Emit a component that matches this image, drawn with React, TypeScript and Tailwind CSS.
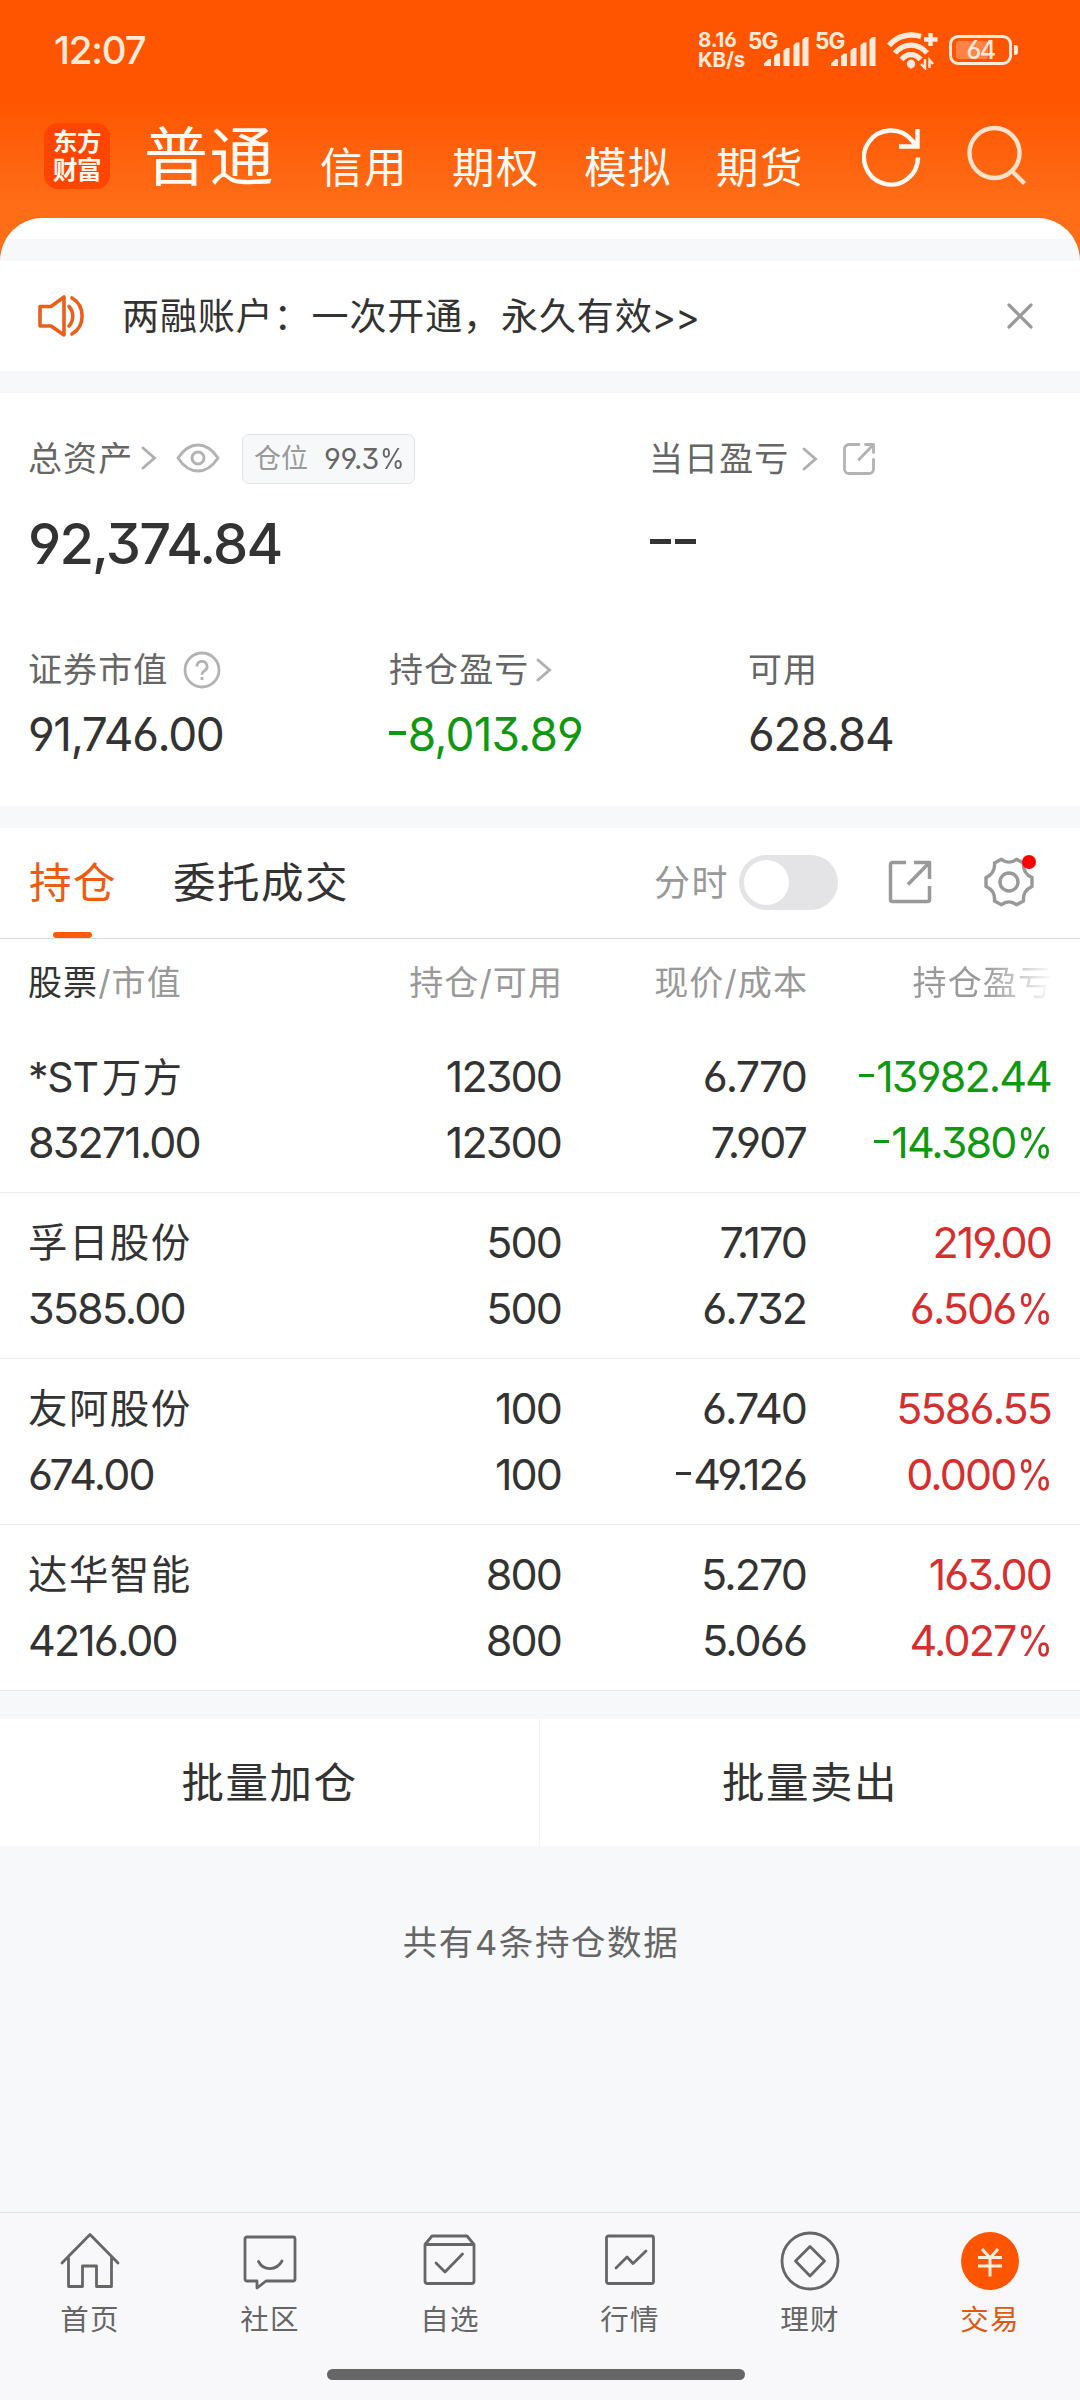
import React from 'react';

type Holding = {
  name: string;
  value: string;
  qty: string;
  avail: string;
  price: string;
  cost: string;
  profit: string;
  rate: string;
  up: boolean;
};

const holdings: Holding[] = [
  { name: '*ST万方', value: '83271.00', qty: '12300', avail: '12300', price: '6.770', cost: '7.907', profit: '-13982.44', rate: '-14.380%', up: false },
  { name: '孚日股份', value: '3585.00', qty: '500', avail: '500', price: '7.170', cost: '6.732', profit: '219.00', rate: '6.506%', up: true },
  { name: '友阿股份', value: '674.00', qty: '100', avail: '100', price: '6.740', cost: '-49.126', profit: '5586.55', rate: '0.000%', up: true },
  { name: '达华智能', value: '4216.00', qty: '800', avail: '800', price: '5.270', cost: '5.066', profit: '163.00', rate: '4.027%', up: true },
];

function Num({ children, className = '' }: { children: string; className?: string }) {
  const negative = children.startsWith('-');
  const percent = children.endsWith('%');
  const digits = children.replace('-', '').replace('%', '');
  return (
    <span className={`whitespace-nowrap ${className}`}>
      {negative && <span className="mr-[0.05em] inline-block h-[0.085em] w-[0.36em] bg-current align-[0.34em]" />}
      {digits}
      {percent && <span className="-ml-[0.11em] inline-block origin-right scale-x-[0.86]">%</span>}
    </span>
  );
}

function Signal() {
  return (
    <div className="relative h-[34px] w-[60px]">
      <span className="absolute left-0 top-[-1px] text-[22.500px] font-bold leading-[20px] tracking-[-0.900px]">5G</span>
      <svg className="absolute left-[16px] top-[5px]" width="45" height="29" viewBox="0 0 45 29" fill="currentColor">
        <path d="M0 29v-2.500l4.500-4.500H7V29zM10 29V19l3-2.500h3V29zM19.500 29V13.500l3-2.500h3V29zM29.500 29V8l3-2.500h3V29zM38.500 29V2.500l3-2.500h3v29z" />
      </svg>
    </div>
  );
}

function StatusBar() {
  return (
    <div className="flex h-[100px] items-start justify-between pl-[54px] pr-[62px] text-[#ffeadb]">
      <div className="mt-[30px] text-[38.500px] font-medium leading-[40px] tracking-[-1.200px]">12:07</div>
      <div className="mt-[32px] flex">
        <div className="-mt-[2px] w-[50px] whitespace-nowrap text-[20.500px] font-bold leading-[20px] tracking-[-0.200px]">
          <div>8.16</div>
          <div>KB/s</div>
        </div>
        <div className="flex gap-[7px]">
          <Signal />
          <Signal />
        </div>
        <svg className="ml-[12px]" width="52" height="38" viewBox="0 0 52 38" fill="none" stroke="currentColor" strokeWidth="5.400">
          <path d="M2 13.500C10 4 22 1 34 4.500" />
          <path d="M8 21C17 10.500 31 10.500 40 21" />
          <path d="M14.500 27.500C20 21 28 21 33.500 27.500" />
          <path d="M24 27.500a4.500 4.500 0 0 1 3.500 7L24 37l-3.500-2.500a4.500 4.500 0 0 1 3.500-7z" fill="currentColor" stroke="none" />
          <path d="M43.500 1v13M37 7.500h13.500" strokeWidth="4.400" />
          <path d="M38 27v9l-4-4M42.500 36v-8l3.500 4" strokeWidth="2.400" />
        </svg>
        <div className="ml-[10px] mt-[3px] flex h-[30px] items-center">
          <div className="relative flex h-[30px] w-[63px] items-center justify-center rounded-[9px] border-[3px] border-current">
            <div className="absolute left-[4px] top-[3px] h-[18px] w-[32px] rounded-[3px] bg-[#ff8344]" />
            <span className="relative text-[25px] font-medium leading-[24px] tracking-[-1.500px]">64</span>
          </div>
          <div className="ml-[2px] h-[10px] w-[4px] rounded-r-[3px] bg-current" />
        </div>
      </div>
    </div>
  );
}

function TopNav() {
  return (
    <div className="flex h-[118px] text-[#fffaf3]">
      <div className="ml-[44px] mt-[23px] flex h-[66px] w-[66px] flex-col items-center justify-center rounded-[14px] bg-[#ff4500] text-[24.500px] font-bold leading-[28px] tracking-[-0.500px]">
        <div>东方</div>
        <div>财富</div>
      </div>
      <div className="ml-[34px] mt-[17px] w-[133px] whitespace-nowrap text-[64px] leading-[80px] tracking-[1.500px]">普通</div>
      <div className="ml-[43px] mt-[48px] flex gap-[44px] text-[42.500px] leading-[40px] tracking-[1.500px]">
        <span>信用</span>
        <span>期权</span>
        <span>模拟</span>
        <span>期货</span>
      </div>
      <svg className="ml-[58px] mt-[26px]" width="62" height="64" viewBox="0 0 62 64" fill="none" stroke="currentColor" strokeWidth="4.400">
        <path d="M56 31.500A27 27 0 1 1 50 14.500L54.500 20" />
        <path d="M55.500 3v17.500H37" />
      </svg>
      <svg className="ml-[42px] mt-[23px] text-[#ffe2cc]" width="62" height="66" viewBox="0 0 62 66" fill="none" stroke="currentColor" strokeWidth="4.400">
        <circle cx="28.500" cy="30" r="25" />
        <path d="M45.500 47.500l13 13" />
      </svg>
    </div>
  );
}

function Chevron({ className = '' }: { className?: string }) {
  return (
    <svg className={`text-[#b0b0b0] ${className}`} width="16" height="24" viewBox="0 0 16 24" fill="none" stroke="currentColor" strokeWidth="2.900" strokeLinecap="round">
      <path d="M2 2l11.500 10L2 22" />
    </svg>
  );
}

function Notice() {
  return (
    <div className="flex h-[110px] items-center bg-white">
      <svg className="ml-[36px]" width="50" height="44" viewBox="0 0 50 44" fill="none" stroke="#e8601c" strokeWidth="3.600" strokeLinejoin="round" strokeLinecap="round">
        <path d="M4 12.500h11L28 3v38L15 32H4z" />
        <path d="M33 12.500c5 5.500 5 14 0 19.500M36 4c13.500 8 13.500 28 0 36" />
      </svg>
      <span className="ml-[36px] mt-[2px] whitespace-nowrap text-[37px] leading-[44px] tracking-[0.900px] text-[#333]">
        两融账户：一次开通，永久有效<span className="-ml-px tracking-[-0.900px]">&gt;&gt;</span>
      </span>
      <svg className="ml-auto mr-[46px]" width="28" height="28" viewBox="0 0 28 28" stroke="#999" strokeWidth="3.200" strokeLinecap="round">
        <path d="M3 3l22 22M25 3L3 25" />
      </svg>
    </div>
  );
}

function Summary() {
  return (
    <div className="h-[413px] bg-white pl-[28px] text-[#333]">
      <div className="flex h-[130px] items-center text-[34px] leading-[40px] tracking-[1.100px] text-[#666]">
        <div className="flex w-[621px] items-center">
          <span className="mt-[2px]">总资产</span>
          <Chevron className="ml-[8px]" />
          <svg className="ml-[19px]" width="44" height="32" viewBox="0 0 44 32" fill="none" stroke="#b3b3b3" strokeWidth="3">
            <path d="M2 16C8 7 14 3 22 3s14 4 20 13c-6 9-12 13-20 13S8 25 2 16z" strokeLinejoin="round" />
            <circle cx="22" cy="16" r="6" />
          </svg>
          <div className="ml-[22px] mt-[2px] flex h-[50px] w-[173px] items-center justify-center gap-[16px] rounded-[7px] border border-[#e3e4e7] bg-[#f7f8fa] text-[27px] tracking-[0px]">
            <span className="text-[#999]">仓位</span>
            <Num className="text-[29px] tracking-[-0.400px]">99.3%</Num>
          </div>
        </div>
        <span className="mt-[2px]">当日盈亏</span>
        <Chevron className="ml-[13px] mt-px" />
        <svg className="ml-[24px] mt-px" width="34" height="34" viewBox="0 0 34 34" fill="none" stroke="#b3b3b3" strokeWidth="2.800" strokeLinecap="round" strokeLinejoin="round">
          <path d="M17 2.500H7A4.500 4.500 0 0 0 2.500 7v20A4.500 4.500 0 0 0 7 31.500h20a4.500 4.500 0 0 0 4.500-4.500v-9.500M23.500 2.500h8v8M31 3L17 17.500" />
        </svg>
      </div>
      <div className="flex h-[44px] items-center text-[56px] font-medium leading-[44px]">
        <Num className="-mt-[3px] w-[622px] tracking-[-1.800px]">92,374.84</Num>
        <div className="-mt-[7px] flex gap-[4px]">
          <span className="h-[5px] w-[21px] bg-[#333]" />
          <span className="h-[5px] w-[21px] bg-[#333]" />
        </div>
      </div>
      <div className="mt-[80px] grid grid-cols-[360px_360px_1fr]">
        <div>
          <div className="flex h-[46px] items-center text-[34px] leading-[46px] tracking-[1.100px] text-[#666]">
            证券市值
            <svg className="ml-[15px]" width="38" height="38" viewBox="0 0 38 38" fill="none" stroke="#b3b3b3" strokeWidth="2.800">
              <circle cx="19" cy="19" r="17" />
              <path d="M14 15.500a5 5 0 1 1 7.500 4.200c-1.800 1.200-2.500 2-2.500 4M19 26v3" />
            </svg>
          </div>
          <div className="mt-[18px] text-[46px] leading-[46px]">
            <Num className="tracking-[-1.400px]">91,746.00</Num>
          </div>
        </div>
        <div className="pl-px">
          <div className="flex h-[46px] items-center text-[34px] leading-[46px] tracking-[1.100px] text-[#666]">
            持仓盈亏
            <Chevron className="ml-[7px]" />
          </div>
          <div className="mt-[18px] text-[46px] leading-[46px] text-[#109810]">
            <Num className="tracking-[-0.900px]">-8,013.89</Num>
          </div>
        </div>
        <div>
          <div className="h-[46px] text-[34px] leading-[46px] tracking-[1.100px] text-[#666]">可用</div>
          <div className="mt-[18px] text-[46px] leading-[46px]">
            <Num className="tracking-[-1.200px]">628.84</Num>
          </div>
        </div>
      </div>
    </div>
  );
}

function Tabs() {
  return (
    <div className="flex h-[111px] border-b border-[#dcdcdc] bg-white pl-[29px] text-[42.500px] leading-[110px] tracking-[1.500px] text-[#333]">
      <div className="relative text-[#ec5d13]">
        持仓
        <div className="absolute bottom-0 left-[24px] h-[6px] w-[39px] rounded-full bg-[#ff5a0a]" />
      </div>
      <div className="ml-[56px]">委托成交</div>
      <div className="ml-auto mr-[43px] flex h-[108px] items-center">
        <span className="mt-[2px] text-[36px] leading-[40px] tracking-[1.500px] text-[#999]">分时</span>
        <div className="ml-[10px] h-[55px] w-[99px] rounded-full bg-[#e4e4e6] p-[5px]">
          <div className="h-[45px] w-[45px] rounded-full bg-white" />
        </div>
        <svg className="ml-[49px]" width="46" height="46" viewBox="0 0 46 46" fill="none" stroke="#999" strokeWidth="3.500" strokeLinejoin="round">
          <path d="M19 3.500H5.500A2 2 0 0 0 3.500 5.500v35a2 2 0 0 0 2 2h35a2 2 0 0 0 2-2V27M27 3.500h15.500V20M42 4L21 25.500" />
        </svg>
        <div className="relative ml-[48px]">
          <svg width="56" height="54" viewBox="0 0 56 54" fill="none" stroke="#999" strokeWidth="3.400" strokeLinejoin="round">
            <path d="M20.500 4.300c4.500 3.600 10.500 3.600 15 0l7 3.700c-0.600 7 1.800 11.500 8.500 14.500v9c-6.700 3-9.100 7.500-8.500 14.500l-7 3.700c-4.500-3.600-10.500-3.600-15 0l-7-3.700c0.600-7-1.800-11.500-8.500-14.500v-9c6.700-3 9.100-7.500 8.500-14.500z" />
            <circle cx="28" cy="27" r="9" />
          </svg>
          <span className="absolute left-[41px] top-0 h-[14px] w-[14px] rounded-full bg-[#ff0000]" />
        </div>
      </div>
    </div>
  );
}

function Table() {
  return (
    <div className="bg-white text-[#333]">
      <div className="grid h-[88px] grid-cols-[28px_250px_285px_245px_245px] items-center text-[34px] leading-[40px] tracking-[1.100px] text-[#999]">
        <span />
        <span>
          <span className="text-[#333]">股票</span>/市值
        </span>
        <span className="text-right">持仓/可用</span>
        <span className="text-right">现价/成本</span>
        <span className="bg-linear-to-r from-[#999] from-72% to-[#f7f7f7] to-98% bg-clip-text text-right text-transparent">持仓盈亏</span>
      </div>
      {holdings.map((h) => (
        <div
          key={h.name}
          className="grid h-[166px] grid-cols-[28px_250px_283px_245px_245px] border-b border-[#ebebeb] pt-[16px] text-[43px] leading-[66px] tracking-[-1.900px]"
        >
          <span />
          <div>
            <div className="h-[66px] text-[39.500px] leading-[68px] tracking-[1.400px]">
              {h.name.startsWith('*ST') ? (
                <>
                  <span className="mr-[4px] text-[41px] tracking-[-1.200px]">*ST</span>
                  {h.name.slice(3)}
                </>
              ) : (
                h.name
              )}
            </div>
            <Num>{h.value}</Num>
          </div>
          <div className="flex flex-col items-end">
            <Num>{h.qty}</Num>
            <Num>{h.avail}</Num>
          </div>
          <div className="flex flex-col items-end">
            <Num>{h.price}</Num>
            <Num>{h.cost}</Num>
          </div>
          <div className={`flex flex-col items-end ${h.up ? 'text-[#d62f2f]' : 'text-[#109810]'}`}>
            <Num>{h.profit}</Num>
            <Num>{h.rate}</Num>
          </div>
        </div>
      ))}
    </div>
  );
}

const navItems: { label: string; active?: boolean; icon: React.ReactNode }[] = [
  { label: '首页', icon: <path d="M2 32L30 3.500 58 32M8.500 27v28.500h14V35h14v20.500h15V27" /> },
  {
    label: '社区',
    icon: (
      <>
        <path d="M7 6h46a2 2 0 0 1 2 2v40a2 2 0 0 1-2 2H26l-9 7v-7H7a2 2 0 0 1-2-2V8a2 2 0 0 1 2-2z" />
        <path d="M18.500 30.500c5 9.500 18 9.500 23.500-0.500" />
      </>
    ),
  },
  {
    label: '自选',
    icon: (
      <>
        <path d="M5 13.500l7-8.500h35l7 8.500V50a2.500 2.500 0 0 1-2.500 2.500h-44A2.500 2.500 0 0 1 5 50zM5 13.500h49" />
        <path d="M16 32l9 9 17.500-18" />
      </>
    ),
  },
  {
    label: '行情',
    icon: (
      <>
        <rect x="6.500" y="5" width="47" height="47.500" rx="2" />
        <path d="M16 37l11-11 6 6.500 13-12.500" />
      </>
    ),
  },
  {
    label: '理财',
    icon: (
      <>
        <circle cx="30" cy="30" r="28" />
        <path d="M30 15.500L44.500 30 30 45 15.500 30z" />
      </>
    ),
  },
  {
    label: '交易',
    active: true,
    icon: (
      <>
        <circle cx="30" cy="30" r="29" fill="#ff5500" stroke="none" />
        <path d="M22 18l8 9 8-9M30 27v18.500M18 26.500h24M18 35h24" stroke="#ffeedd" strokeWidth="3" strokeLinecap="butt" />
      </>
    ),
  },
];

function BottomNav() {
  return (
    <div className="h-[188px] border-t border-[#e2e3e5] bg-[#f8f8fb]">
      <div className="grid h-[156px] grid-cols-6 pt-[18px]">
        {navItems.map((n) => (
          <div key={n.label} className={`flex flex-col items-center ${n.active ? 'text-[#dd5a14]' : 'text-[#666]'}`}>
            <svg width="60" height="60" viewBox="0 0 60 60" fill="none" stroke="currentColor" strokeWidth="2.800" strokeLinejoin="round" strokeLinecap="round">
              {n.icon}
            </svg>
            <span className="mt-[11px] text-[28.500px] leading-[36px] tracking-[1.300px]">{n.label}</span>
          </div>
        ))}
      </div>
      <div className="mx-auto h-[11px] w-[418px] -translate-x-[4px] rounded-full bg-[#666]" />
    </div>
  );
}

export default function App() {
  return (
    <div className="flex h-[2400px] w-[1080px] flex-col overflow-hidden bg-[#f7f8fa] font-['Inter','Noto_Sans_CJK_SC',sans-serif] [font-feature-settings:'cv03','cv04','cv09']">
      <div className="bg-linear-to-b from-[#ff5500] from-[100px] to-[#ff6e17] to-[210px]">
        <StatusBar />
        <TopNav />
        <div className="h-[43px] overflow-hidden rounded-t-[46px] bg-[#f7f8fa]">
          <div className="h-[21px] bg-white" />
        </div>
      </div>
      <Notice />
      <div className="h-[22px] shrink-0" />
      <Summary />
      <div className="h-[22px] shrink-0" />
      <Tabs />
      <Table />
      <div className="mt-[28px] grid h-[127px] shrink-0 grid-cols-2 bg-white text-center text-[42.500px] leading-[128px] tracking-[1.500px] text-[#333]">
        <div className="border-r border-[#f3f4f6]">批量加仓</div>
        <div>批量卖出</div>
      </div>
      <div className="mt-[73px] pl-[2px] text-center text-[34.500px] leading-[48px] tracking-[1.600px] text-[#666]">共有4条持仓数据</div>
      <div className="mt-auto">
        <BottomNav />
      </div>
    </div>
  );
}
